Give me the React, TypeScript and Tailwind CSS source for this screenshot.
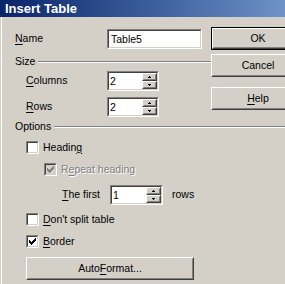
import type { FC, ReactNode } from "react";

const CHECK = ["......X", ".....XX", "X...XXX", "XX.XXX.", "XXXXX..", ".XXX...", "..X...."];
const UP = [".X.", "XXX"];
const DOWN = ["XXX", ".X."];

const Pixels: FC<{ rows: string[]; color: string }> = ({ rows, color }) => (
    <svg width={rows[0].length} height={rows.length} shapeRendering="crispEdges" className="block">
        {rows.map((r, y) =>
            r.split("").map((c, x) =>
                c === "X" ? <rect key={`${x}-${y}`} x={x} y={y} width={1} height={1} fill={color} /> : null
            )
        )}
    </svg>
);

const Sunken: FC<{ className?: string; children?: ReactNode; inner?: string }> = ({ className = "", inner = "bg-white", children }) => (
    <div className={`border border-t-[#808080] border-l-[#808080] border-b-white border-r-white ${className}`}>
        <div className={`h-full border border-t-[#404040] border-l-[#404040] border-b-[#d4d0c8] border-r-[#d4d0c8] ${inner}`}>
            {children}
        </div>
    </div>
);

const Raised: FC<{ className?: string; children?: ReactNode }> = ({ className = "", children }) => (
    <div className={`border border-t-white border-l-white border-b-[#404040] border-r-[#404040] bg-[#d4d0c8] ${className}`}>
        <div className="h-full flex items-center justify-center border border-t-[#d4d0c8] border-l-[#d4d0c8] border-b-[#808080] border-r-[#808080]">
            {children}
        </div>
    </div>
);

const Checkbox: FC<{ checked?: boolean; disabled?: boolean }> = ({ checked, disabled }) => (
    <Sunken className="w-[13px] h-[13px] shrink-0" inner={disabled ? "bg-[#d4d0c8]" : "bg-white"}>
        <div className="h-full flex items-center justify-center">
            {checked && <Pixels rows={CHECK} color={disabled ? "#808080" : "#000000"} />}
        </div>
    </Sunken>
);

const Spin: FC<{ value: string; className?: string }> = ({ value, className = "" }) => (
    <Sunken className={`h-[20px] shrink-0 ${className}`}>
        <div className="h-full flex">
            <div className="flex-1 pl-[1px] leading-[16px]">{value}</div>
            <div className="w-[15px] flex flex-col">
                <Raised className="h-[8px]">
                    <Pixels rows={UP} color="#000000" />
                </Raised>
                <Raised className="h-[8px]">
                    <Pixels rows={DOWN} color="#000000" />
                </Raised>
            </div>
        </div>
    </Sunken>
);

const Etched = () => (
    <div className="flex-1 flex flex-col">
        <div className="h-px bg-[#808080]" />
        <div className="h-px bg-white" />
    </div>
);

const U: FC<{ children: ReactNode }> = ({ children }) => <span className="underline underline-offset-[2px]">{children}</span>;

export default function App() {
    return (
        <div className="w-[285px] h-[284px] overflow-hidden bg-[#d4d0c8] flex flex-col text-[10.5px] text-black font-['Liberation_Sans',Arial,sans-serif]">
            <div className="h-[17px] shrink-0 pl-[5px] flex items-center text-white font-bold text-[13px] bg-gradient-to-r from-[#0a246a] to-[#6f92c8]">
                Insert Table
            </div>
            <div className="flex-1 ml-px border-l border-white">
                <div className="flex">
                    <div className="w-[209px] shrink-0 pl-[13px]">
                        <div className="mt-[12px] flex items-center h-[20px]">
                            <div className="w-[92px]">
                                <U>N</U>ame
                            </div>
                            <Sunken className="w-[95px] h-[20px]">
                                <div className="pl-[2px] leading-[16px]">Table5</div>
                            </Sunken>
                        </div>
                        <div className="mt-[6px] h-[13px] flex items-center gap-[3px]">
                            <span>Size</span>
                            <Etched />
                        </div>
                        <div className="mt-[3px] pl-[11px] flex items-center h-[20px]">
                            <div className="w-[81px]">
                                <U>C</U>olumns
                            </div>
                            <Spin value="2" className="w-[52px]" />
                        </div>
                        <div className="mt-[6px] pl-[11px] flex items-center h-[20px]">
                            <div className="w-[81px]">
                                <U>R</U>ows
                            </div>
                            <Spin value="2" className="w-[52px]" />
                        </div>
                    </div>
                    <div className="pt-[10px] flex flex-col shrink-0">
                        <div className="border border-black w-[94px] h-[23px]">
                            <Raised className="h-full">OK</Raised>
                        </div>
                        <Raised className="mt-[4px] w-[94px] h-[23px]">Cancel</Raised>
                        <Raised className="mt-[10px] w-[94px] h-[23px]">
                            <span>
                                <U>H</U>elp
                            </span>
                        </Raised>
                    </div>
                </div>
                <div className="pl-[13px]">
                    <div className="mt-[3px] h-[13px] flex items-center gap-[3px]">
                        <span>Options</span>
                        <Etched />
                    </div>
                    <div className="mt-[8px] pl-[11px] flex items-center gap-[4px] h-[13px]">
                        <Checkbox />
                        <span>
                            Headin<U>g</U>
                        </span>
                    </div>
                    <div className="mt-[9px] pl-[29px] flex items-center gap-[4px] h-[13px] text-[#808080]">
                        <Checkbox checked disabled />
                        <span className="[text-shadow:1px_1px_0_#ffffff]">
                            R<U>e</U>peat heading
                        </span>
                    </div>
                    <div className="mt-[9px] pl-[47px] flex items-center h-[20px]">
                        <div className="w-[48px]">
                            <U>T</U>he first
                        </div>
                        <Spin value="1" className="w-[53px]" />
                        <span className="ml-[9px]">rows</span>
                    </div>
                    <div className="mt-[8px] pl-[11px] flex items-center gap-[4px] h-[13px]">
                        <Checkbox />
                        <span>
                            <U>D</U>on't split table
                        </span>
                    </div>
                    <div className="mt-[9px] pl-[11px] flex items-center gap-[4px] h-[13px]">
                        <Checkbox checked />
                        <span>
                            <U>B</U>order
                        </span>
                    </div>
                    <div className="mt-[9px] pl-[11px]">
                        <Raised className="w-[168px] h-[23px]">
                            <span>
                                Auto<U>F</U>ormat...
                            </span>
                        </Raised>
                    </div>
                </div>
            </div>
        </div>
    );
}
